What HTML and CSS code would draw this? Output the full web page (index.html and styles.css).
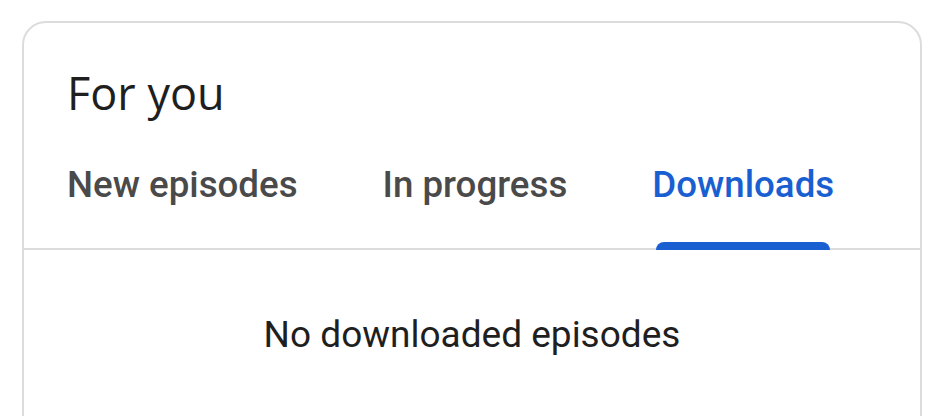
FILE: index.html
```html
<!DOCTYPE html>
<html>
<head>
<meta charset="utf-8">
<link rel="stylesheet" href="styles.css">
</head>
<body>
<div class="card">
  <h1 class="title">For you</h1>
  <div class="tabs">
    <div class="tab">New episodes</div>
    <div class="tab">In progress</div>
    <div class="tab active">Downloads<span class="indicator"></span></div>
  </div>
  <div class="empty">No downloaded episodes</div>
</div>
</body>
</html>
```
FILE: styles.css
```css
html, body {
  margin: 0;
  padding: 0;
  background: #fff;
  overflow: hidden;
}
body {
  height: 416px;
}
.card {
  margin: 21px 0 0 22px;
  width: 896px;
  height: 600px;
  border: 2px solid #dcdcdc;
  border-radius: 24px;
  box-sizing: content-box;
}
.title {
  margin: 0;
  padding: 40px 0 0 43px;
  height: 82px;
  font-family: "Open Sans", sans-serif;
  font-weight: 400;
  font-size: 45px;
  line-height: 60px;
  color: #1f1f1f;
}
.tabs {
  display: flex;
  height: 103px;
  padding-left: 0.5px;
  border-bottom: 2px solid #dcdcdc;
}
.tab {
  position: relative;
  padding: 0 42.5px;
  font-family: Roboto, sans-serif;
  font-weight: 500;
  font-size: 36.7px;
  line-height: 80px;
  color: #4a4a4a;
}
.tab.active {
  color: #1a5fd1;
}
.indicator {
  position: absolute;
  left: 46px;
  right: 47px;
  bottom: -2px;
  height: 8px;
  background: #1a5fd1;
  border-radius: 8px 8px 0 0;
}
.empty {
  padding-top: 60px;
  text-align: center;
  font-family: Roboto, sans-serif;
  font-size: 37px;
  line-height: 50px;
  color: #1f1f1f;
}
```
